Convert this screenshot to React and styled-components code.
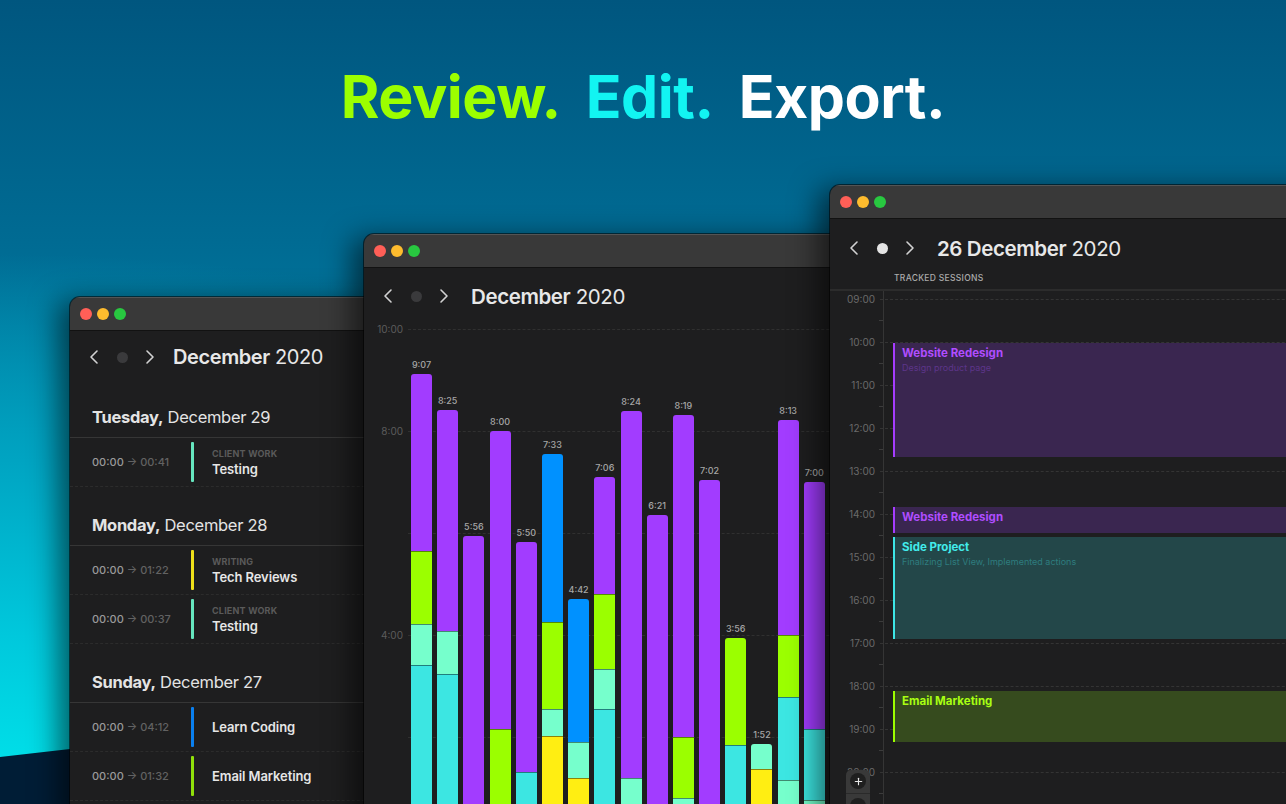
import React from 'react';
import styled, { createGlobalStyle } from 'styled-components';
import { ChevronLeft, ChevronRight, Plus } from 'lucide-react';

const GlobalStyle = createGlobalStyle`
  html, body { margin: 0; padding: 0; width: 1286px; height: 804px; overflow: hidden; }
  body { font-family: Inter, "Noto Sans", sans-serif; -webkit-font-smoothing: antialiased; }
  #root { width: 1286px; height: 804px; }
  * { box-sizing: border-box; }
`;

const Page = styled.div`
  position: relative;
  width: 1286px;
  height: 804px;
  overflow: hidden;
  background:
    radial-gradient(120% 95% at 0% 100%, #00e6ec 0%, #00c8dc 22%, #00a4c2 45%, rgba(0, 130, 170, 0) 72%),
    linear-gradient(180deg, #00567f 0%, #006b93 30%, #0084a7 60%, #0094b3 100%);
`;

const Ground = styled.svg`
  position: absolute;
  left: 0;
  bottom: 0;
`;

const Headline = styled.h1`
  margin: 0;
  padding-top: 67px;
  text-align: center;
  font-family: Inter, sans-serif;
  font-weight: 750;
  font-size: 59px;
  line-height: 1;
  letter-spacing: -0.5px;
  white-space: pre;
`;

const Word = styled.span`
  color: ${(p) => p.$c};
`;

const Window = styled.div`
  position: absolute;
  left: ${(p) => p.$x}px;
  top: ${(p) => p.$y}px;
  width: ${(p) => p.$w}px;
  height: ${(p) => p.$h}px;
  z-index: ${(p) => p.$z};
  border-radius: 10px 10px 0 0;
  overflow: hidden;
  background: #1e1e1f;
  display: flex;
  flex-direction: column;
  box-shadow: 0 0 0 1px rgba(0, 0, 0, 0.55), -12px 4px 28px rgba(0, 0, 0, 0.55);
`;

const TitleBar = styled.div`
  flex: none;
  height: 34px;
  background: #393939;
  border-bottom: 1px solid #121212;
  display: flex;
  align-items: center;
  gap: 5px;
  padding-left: 10px;
  box-shadow: inset 0 1px 0 rgba(255, 255, 255, 0.14);
`;

const Light = styled.span`
  width: 12px;
  height: 12px;
  border-radius: 50%;
  background: ${(p) => p.$c};
`;

const Nav = styled.div`
  flex: none;
  height: ${(p) => p.$h}px;
  padding-top: ${(p) => p.$pt || 0}px;
  display: flex;
  align-items: center;
  padding-left: 10px;
`;

const NavSlot = styled.div`
  width: 28px;
  display: flex;
  align-items: center;
  justify-content: center;
  color: #d2d2d2;
`;

const NavDot = styled.span`
  width: 11px;
  height: 11px;
  border-radius: 50%;
  background: ${(p) => (p.$active ? '#e4e4e4' : '#3a3a3c')};
`;

const NavTitle = styled.div`
  margin-left: ${(p) => p.$gap}px;
  font-size: ${(p) => p.$size}px;
  color: #e8e8e8;
  letter-spacing: -0.4px;
  white-space: nowrap;
  b { font-weight: 600; }
`;

/* ---------- list window ---------- */

const DayHeader = styled.div`
  height: ${(p) => (p.$first ? 55 : 59)}px;
  display: flex;
  align-items: flex-end;
  padding: 0 0 10px 22px;
  font-size: 16.5px;
  line-height: 20px;
  color: #e4e4e4;
  letter-spacing: -0.3px;
  border-bottom: 1px solid #363636;
  white-space: pre;
  b { font-weight: 700; }
`;

const Row = styled.div`
  height: 49px;
  display: flex;
  align-items: center;
  padding-left: 22px;
  border-bottom: 1px dashed #2c2c2c;
`;

const Time = styled.div`
  width: 99px;
  font-size: 11px;
  font-weight: 500;
  color: #626262;
  white-space: pre;
  span { color: #9a9a9a; }
`;

const RowBar = styled.div`
  width: 3px;
  height: 40px;
  border-radius: 1px;
  background: ${(p) => p.$c};
  margin-right: 18px;
`;

const RowText = styled.div`
  display: flex;
  flex-direction: column;
`;

const Category = styled.div`
  font-size: 9px;
  line-height: 11px;
  font-weight: 700;
  color: #5a5a5a;
  letter-spacing: 0.2px;
`;

const RowTitle = styled.div`
  font-size: 13px;
  line-height: 16px;
  font-weight: 600;
  color: #e6e6e6;
  letter-spacing: -0.1px;
  margin-top: ${(p) => (p.$withCat ? 2 : 0)}px;
`;

/* ---------- chart window ---------- */

const HOUR = 51;

const Chart = styled.div`
  position: relative;
  flex: none;
  height: 515px;
  display: flex;
  align-items: flex-end;
  gap: 5.2px;
  padding-left: 47px;
`;

const GridRow = styled.div`
  position: absolute;
  left: 0;
  right: 0;
  bottom: ${(p) => p.$h * HOUR - 6}px;
  height: 12px;
  display: flex;
  align-items: center;
`;

const GridLabel = styled.div`
  width: 39px;
  text-align: right;
  font-size: 10px;
  color: #5c5c5c;
`;

const GridDash = styled.div`
  flex: 1;
  margin-left: 5px;
  border-top: 1px dashed #303030;
`;

const BarCol = styled.div`
  position: relative;
  z-index: 1;
  width: 21px;
  display: flex;
  flex-direction: column;
  align-items: center;
`;

const BarLabel = styled.div`
  font-size: 9px;
  line-height: 11px;
  font-weight: 500;
  color: #a6a6a6;
  margin-bottom: 4px;
`;

const BarBody = styled.div`
  width: 100%;
  border-radius: 3px 3px 0 0;
  overflow: hidden;
  display: flex;
  flex-direction: column;
`;

const Segment = styled.div`
  flex: ${(p) => (p.$fill ? '1' : 'none')};
  background: ${(p) => p.$c};
  & + & { border-top: 1px solid rgba(0, 0, 0, 0.45); }
`;

/* ---------- day window ---------- */

const SessionsHeader = styled.div`
  flex: none;
  height: 20px;
  padding: 2px 0 0 64px;
  font-size: 8.5px;
  line-height: 10px;
  font-weight: 500;
  letter-spacing: 0.3px;
  color: #ababab;
  border-bottom: 2px solid #2c2c2c;
`;

const Timeline = styled.div`
  position: relative;
  flex: 1;
  padding-top: 8px;
  background: linear-gradient(#353535, #353535) no-repeat 53px 0 / 1px 100%;
`;

const HourSlot = styled.div`
  height: 43px;
  display: grid;
  grid-template-columns: 53px 1fr;
`;

const HourLabel = styled.div`
  position: relative;
  margin-top: -6px;
  padding-right: 8px;
  text-align: right;
  font-size: 10px;
  line-height: 12px;
  color: #6a6a6a;
  &::after {
    content: '';
    position: absolute;
    right: 0;
    top: 27px;
    width: 4px;
    border-top: 1px solid #3c3c3c;
  }
`;

const HourLine = styled.div`
  margin-left: -3px;
  border-top: 1px dashed #343434;
`;

const Event = styled.div`
  position: absolute;
  left: 63px;
  right: 0;
  top: ${(p) => p.$top}px;
  height: ${(p) => p.$h}px;
  background: ${(p) => p.$bg};
  border-left: 2px solid ${(p) => p.$c};
  padding: 3px 7px;
  z-index: 1;
`;

const EventTitle = styled.div`
  font-size: 11.5px;
  line-height: 14px;
  font-weight: 700;
  color: ${(p) => p.$c};
`;

const EventSub = styled.div`
  margin-top: 2px;
  font-size: 9px;
  line-height: 12px;
  color: ${(p) => p.$c};
`;

const ZoomControl = styled.div`
  position: absolute;
  z-index: 2;
  left: 16px;
  top: 479px;
  width: 24px;
  height: 50px;
  border-radius: 5px;
  background: #393939;
  display: flex;
  flex-direction: column;
  align-items: center;
  padding-top: 3px;
`;

const ZoomButton = styled.div`
  width: 16px;
  height: 16px;
  border-radius: 50%;
  background: #1f1f1f;
  color: #e6e6e6;
  display: flex;
  align-items: center;
  justify-content: center;
`;

const ZoomDivider = styled.div`
  width: 100%;
  margin: 4px 0;
  border-top: 1px solid #2a2a2a;
`;

/* ---------- data ---------- */

const Lights = () => (
  <TitleBar>
    <Light $c="#ff5f57" />
    <Light $c="#febc2e" />
    <Light $c="#28c840" />
  </TitleBar>
);

const NavBar = ({ h, pt, active, gap, size, children }) => (
  <Nav $h={h} $pt={pt}>
    <NavSlot><ChevronLeft size={24} strokeWidth={1.6} /></NavSlot>
    <NavSlot><NavDot $active={active} /></NavSlot>
    <NavSlot><ChevronRight size={24} strokeWidth={1.6} /></NavSlot>
    <NavTitle $gap={gap} $size={size}>{children}</NavTitle>
  </Nav>
);

const MINT_BAR = '#66e6bf';
const days = [
  {
    day: 'Tuesday,',
    date: ' December 29',
    rows: [{ to: '00:41', cat: 'CLIENT WORK', title: 'Testing', color: MINT_BAR }],
  },
  {
    day: 'Monday,',
    date: ' December 28',
    rows: [
      { to: '01:22', cat: 'WRITING', title: 'Tech Reviews', color: '#efe01a' },
      { to: '00:37', cat: 'CLIENT WORK', title: 'Testing', color: MINT_BAR },
    ],
  },
  {
    day: 'Sunday,',
    date: ' December 27',
    rows: [
      { to: '04:12', title: 'Learn Coding', color: '#0a80f0' },
      { to: '01:32', title: 'Email Marketing', color: '#90e00a' },
    ],
  },
];

const P = '#a23cff';
const L = '#9bff00';
const M = '#76ffcc';
const C = '#3ce6e2';
const B = '#0091ff';
const Y = '#ffee12';

const bars = [
  ['9:07', [[P, 177], [L, 73], [M, 41], [C]]],
  ['8:25', [[P, 221], [M, 43], [C]]],
  ['5:56', [[P]]],
  ['8:00', [[P, 298], [L]]],
  ['5:50', [[P, 230], [C]]],
  ['7:33', [[B, 168], [L, 87], [M, 27], [Y]]],
  ['4:42', [[B, 143], [M, 36], [Y]]],
  ['7:06', [[P, 117], [L, 75], [M, 40], [C]]],
  ['8:24', [[P, 367], [M]]],
  ['6:21', [[P]]],
  ['8:19', [[P, 322], [L, 61], [M]]],
  ['7:02', [[P]]],
  ['3:56', [[L, 107], [C]]],
  ['1:52', [[M, 25], [Y]]],
  ['8:13', [[P, 215], [L, 62], [C, 83], [M]]],
  ['7:00', [[P, 247], [C, 71], [M]]],
];

const toHours = (s) => {
  const [h, m] = s.split(':').map(Number);
  return h + m / 60;
};

const hours = ['09:00', '10:00', '11:00', '12:00', '13:00', '14:00', '15:00', '16:00', '17:00', '18:00', '19:00', '20:00'];

const events = [
  { top: 52, h: 114, title: 'Website Redesign', sub: 'Design product page', c: '#a63cff', bg: '#3a2650', tc: '#b04dff', sc: '#5d358a' },
  { top: 216, h: 26, title: 'Website Redesign', c: '#a63cff', bg: '#3a2650', tc: '#b04dff' },
  { top: 246, h: 102, title: 'Side Project', sub: 'Finalizing List View, Implemented actions', c: '#3de6e6', bg: '#234749', tc: '#42ecec', sc: '#2e7d7f' },
  { top: 400, h: 51, title: 'Email Marketing', c: '#9cff00', bg: '#364b1e', tc: '#a8ff12' },
];

export default function App() {
  return (
    <Page>
      <GlobalStyle />
      <Ground width="420" height="110" viewBox="0 0 420 110">
        <polygon points="0,63 420,15 420,110 0,110" fill="#001d36" />
      </Ground>

      <Headline>
        <Word $c="#9cff00">Review.</Word>{'  '}
        <Word $c="#12f4f2">Edit.</Word>{'  '}
        <Word $c="#ffffff">Export.</Word>
      </Headline>

      <Window $x={70} $y={297} $w={340} $h={530} $z={1}>
        <Lights />
        <NavBar h={52} gap={9} size={20}>
          <b>December</b> 2020
        </NavBar>
        {days.map((d, i) => (
          <React.Fragment key={d.day}>
            <DayHeader $first={i === 0}>
              <b>{d.day}</b>{d.date}
            </DayHeader>
            {d.rows.map((r, j) => (
              <Row key={j}>
                <Time><span>00:00</span> → {r.to}</Time>
                <RowBar $c={r.color} />
                <RowText>
                  {r.cat && <Category>{r.cat}</Category>}
                  <RowTitle $withCat={!!r.cat}>{r.title}</RowTitle>
                </RowText>
              </Row>
            ))}
          </React.Fragment>
        ))}
      </Window>

      <Window $x={364} $y={234} $w={520} $h={600} $z={2}>
        <Lights />
        <NavBar h={56} gap={13} size={20.5}>
          <b>December</b> 2020
        </NavBar>
        <Chart>
          {[10, 8, 6, 4, 2].map((h) => (
            <GridRow key={h} $h={h}>
              <GridLabel>{h === 10 || h === 8 || h === 4 ? `${h}:00` : ''}</GridLabel>
              <GridDash />
            </GridRow>
          ))}
          {bars.map(([label, segs], i) => (
            <BarCol key={i}>
              <BarLabel>{label}</BarLabel>
              <BarBody style={{ height: `${toHours(label) * HOUR}px` }}>
                {segs.map(([c, px], k) => (
                  <Segment key={k} $c={c} $fill={px === undefined} style={px !== undefined ? { height: `${px}px` } : undefined} />
                ))}
              </BarBody>
            </BarCol>
          ))}
        </Chart>
      </Window>

      <Window $x={830} $y={185} $w={520} $h={640} $z={3}>
        <Lights />
        <NavBar h={52} pt={6} active gap={13} size={20.5}>
          <b>26 December</b> 2020
        </NavBar>
        <SessionsHeader>TRACKED SESSIONS</SessionsHeader>
        <Timeline>
          {hours.map((h) => (
            <HourSlot key={h}>
              <HourLabel>{h}</HourLabel>
              <HourLine />
            </HourSlot>
          ))}
          {events.map((e, i) => (
            <Event key={i} $top={e.top} $h={e.h} $c={e.c} $bg={e.bg}>
              <EventTitle $c={e.tc}>{e.title}</EventTitle>
              {e.sub && <EventSub $c={e.sc}>{e.sub}</EventSub>}
            </Event>
          ))}
          <ZoomControl>
            <ZoomButton><Plus size={11} strokeWidth={2.5} /></ZoomButton>
            <ZoomDivider />
            <ZoomButton />
          </ZoomControl>
        </Timeline>
      </Window>
    </Page>
  );
}
